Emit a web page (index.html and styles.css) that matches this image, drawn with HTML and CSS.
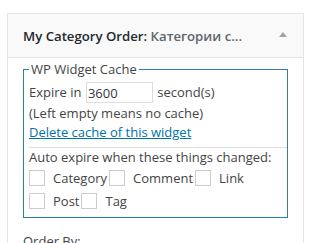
FILE: index.html
```html
<!DOCTYPE html>
<html>
<head>
<meta charset="utf-8">
<link rel="stylesheet" href="styles.css">
</head>
<body>
<div class="page">
  <div class="widget">
    <div class="widget-top">
      <h3 class="widget-title">My Category Order:<span class="in-title"> Категории с...</span></h3>
      <span class="toggle"></span>
    </div>
    <div class="widget-inside">
      <div class="cache">
        <div class="cache-head"><span class="cache-title">WP Widget Cache</span></div>
        <div class="cache-body">
          <div class="row expire">Expire in <input class="num" type="text" value="3600"> second(s)</div>
          <div class="row hint">(Left empty means no cache)</div>
          <div class="row del"><a href="#">Delete cache of this widget</a></div>
          <div class="sep"></div>
          <div class="row auto">Auto expire when these things changed:</div>
          <div class="checks">
            <span class="box"></span><span class="lbl">Category</span><span class="box"></span><span class="lbl">Comment</span><span class="box"></span><span class="lbl">Link</span>
          </div>
          <div class="checks">
            <span class="box"></span><span class="lbl">Post</span><span class="box"></span><span class="lbl">Tag</span>
          </div>
        </div>
      </div>
      <div class="order">Order By:</div>
    </div>
  </div>
</div>
</body>
</html>
```
FILE: styles.css
```css
html, body {
  margin: 0;
  padding: 0;
  background: #fff;
}
body {
  font-family: "Open Sans", "Noto Sans", sans-serif;
  font-size: 13px;
  color: #444;
}
.page {
  padding: 13px 7px 0 7px;
}
.widget {
  border: 1px solid #e5e5e5;
  background: #fff;
}
.widget-top {
  height: 43px;
  background: #f9f9f9;
  border-bottom: 1px solid #e5e5e5;
  display: flex;
  align-items: center;
  padding: 0 16px 0 15px;
}
.widget-title {
  margin: 0;
  flex: 1;
  font-size: 13.2px;
  font-weight: 600;
  color: #23282d;
  white-space: nowrap;
  padding-top: 1px;
}
.in-title {
  color: #5d656d;
}
.toggle {
  width: 0;
  height: 0;
  border-left: 4px solid transparent;
  border-right: 4px solid transparent;
  border-bottom: 5px solid #a0a5aa;
  margin-top: -2px;
}
.widget-inside {
  padding: 2px 15px 0 15px;
}
.cache-head {
  display: flex;
  height: 18px;
}
.cache-head::before,
.cache-head::after {
  content: "";
  align-self: flex-end;
  height: 8px;
  border-top: 1px solid #2a7fb0;
}
.cache-head::before {
  width: 5px;
  border-left: 1px solid #2a7fb0;
}
.cache-head::after {
  flex: 1;
  border-right: 1px solid #2a7fb0;
}
.cache-title {
  padding: 0 2px;
  line-height: 18px;
  color: #444;
}
.cache-body {
  border: 1px solid #2a7fb0;
  border-top: none;
  padding: 4px 0 5px 5px;
}
.row {
  line-height: 19px;
}
.expire {
  display: flex;
  align-items: center;
  height: 21px;
  white-space: pre;
}
.num {
  box-sizing: border-box;
  width: 67px;
  height: 21px;
  margin: 0 1px 0 1px;
  padding: 0 1px;
  border: 1px solid #ddd;
  font-family: inherit;
  font-size: 13px;
  color: #32373c;
  outline: none;
}
.hint {
  line-height: 20px;
}
.del a {
  color: #0073aa;
  text-decoration: underline;
}
.sep {
  border-top: 1px solid #ddd;
  margin-top: 5px;
}
.auto {
  line-height: 18px;
}
.checks {
  display: flex;
  align-items: center;
  height: 23px;
}
.box {
  box-sizing: border-box;
  width: 16px;
  height: 16px;
  border: 1px solid #ccc;
  background: #fff;
  margin: 0 8px 0 2px;
}
.box:first-child {
  margin-left: 0;
}
.order {
  margin-top: 14px;
  line-height: 18px;
}
```
